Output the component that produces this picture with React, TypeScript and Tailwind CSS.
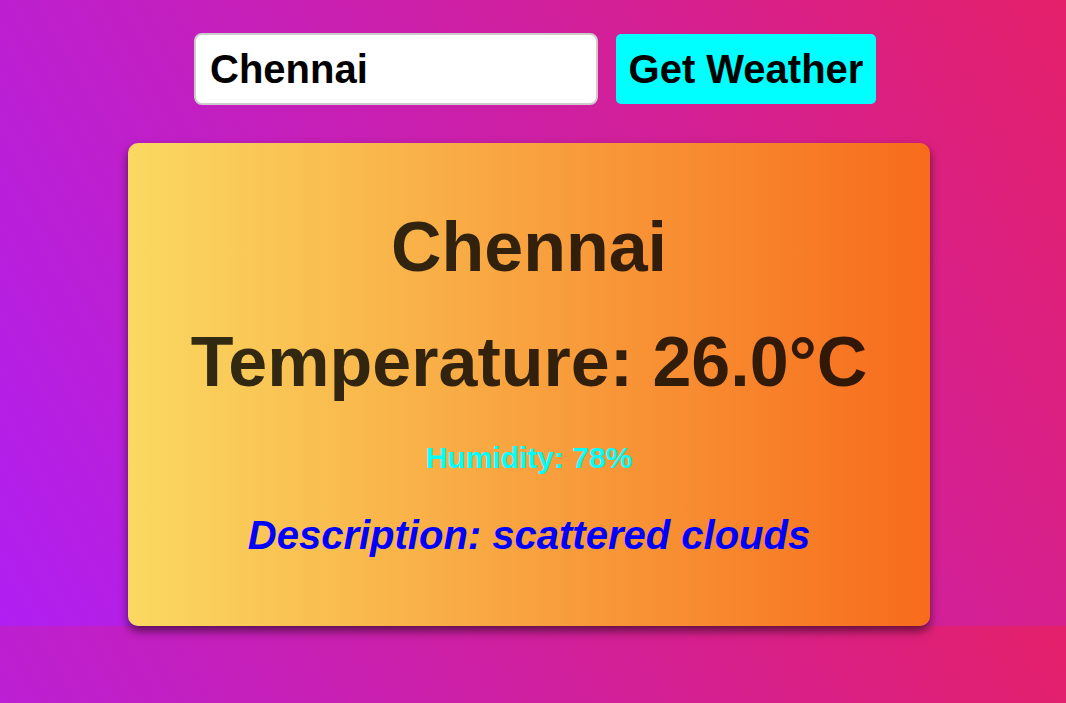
import React, { useState } from "react";

export default function App() {
  const [city, setCity] = useState("Chennai");
  return (
    <div className="min-h-[703px] w-full bg-[linear-gradient(60deg,#b01ff2,#e4206a)] bg-[length:100%_626px] bg-repeat font-['Liberation_Sans',Arial,sans-serif]">
      <div className="flex flex-col items-start pt-[33px]">
        <div className="ml-[194px] flex items-center gap-[18px]">
          <input
            value={city}
            onChange={(e) => setCity(e.target.value)}
            className="h-[72px] w-[404px] rounded-lg border-2 border-[#cccccc] bg-white pl-[14px] text-[40px] font-bold text-black outline-none"
          />
          <button className="h-[70px] w-[260px] rounded-[5px] bg-[#00ffff] text-[40px] font-bold text-black">
            Get Weather
          </button>
        </div>
        <div className="ml-[128px] mt-[38px] flex h-[483px] w-[802px] flex-col items-center rounded-[10px] bg-[linear-gradient(to_right,#fad961,#f76b1c)] pt-[65px] text-center shadow-[0_5px_10px_rgba(0,0,0,0.55)]">
          <h1 className="text-[70px] font-bold leading-[79px] text-black/80">Chennai</h1>
          <h2 className="mt-[36px] text-[70px] font-bold leading-[79px] text-black/80">
            Temperature: 26.0°C
          </h2>
          <p className="mt-[37px] text-[30px] font-bold leading-[37px] text-[#00ffff]">
            Humidity: 78%
          </p>
          <p className="mt-[36px] text-[40px] font-bold italic leading-[46px] text-[#0000ff]">
            Description: scattered clouds
          </p>
        </div>
      </div>
    </div>
  );
}
